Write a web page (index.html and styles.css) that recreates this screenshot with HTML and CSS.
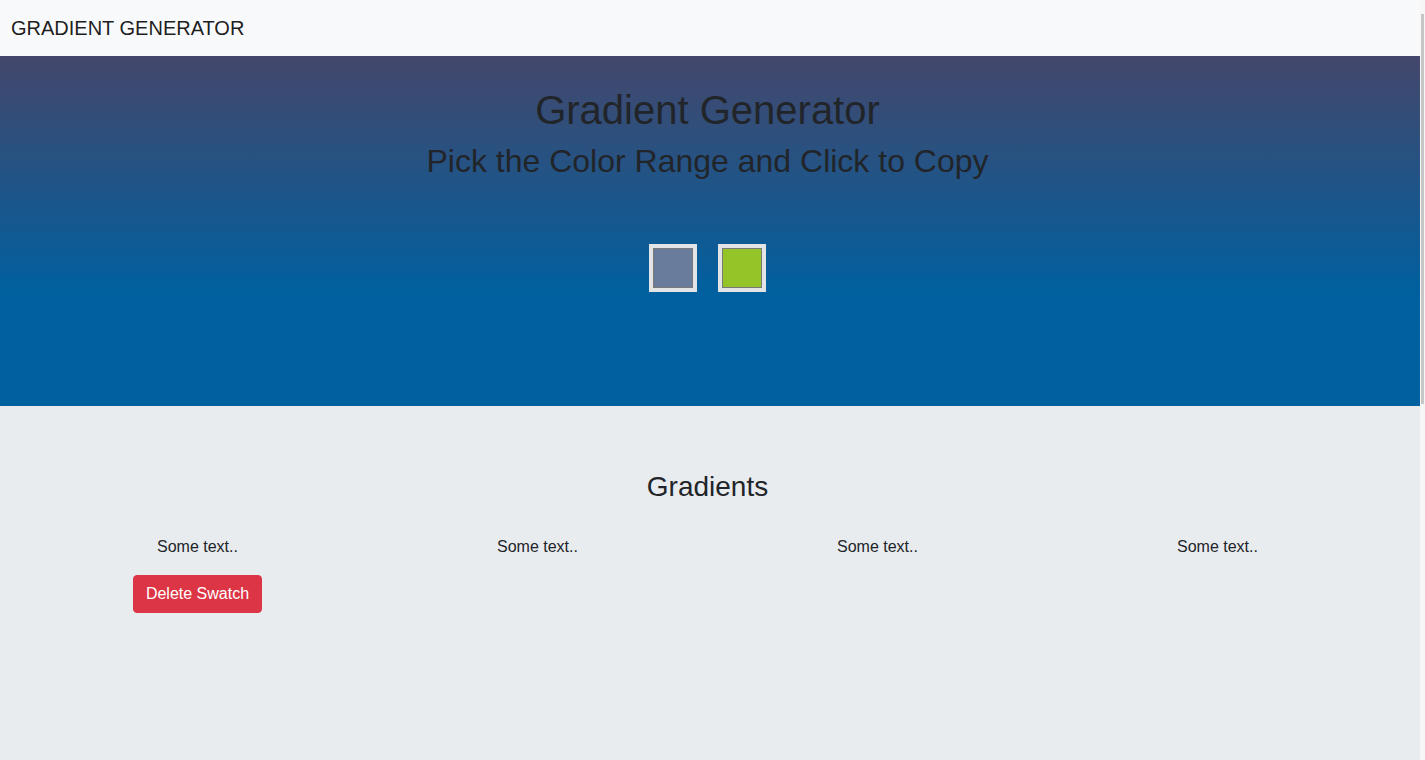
FILE: index.html
```html
<!DOCTYPE html>
<html lang="en">
<head>
<meta charset="utf-8">
<title>Gradient Generator</title>
<link rel="stylesheet" href="styles.css">
</head>
<body>
  <nav class="navbar">
    <span class="brand">GRADIENT GENERATOR</span>
  </nav>
  <header class="hero">
    <div class="hero-inner">
      <h1 class="title">Gradient Generator</h1>
      <h2 class="subtitle">Pick the Color Range and Click to Copy</h2>
      <div class="pickers">
        <div class="picker"><div class="swatch swatch-slate"></div></div>
        <div class="picker"><div class="swatch swatch-green"></div></div>
      </div>
    </div>
  </header>
  <main class="gradients">
    <h3 class="section-title">Gradients</h3>
    <div class="grid">
      <div class="card">
        <p class="card-text">Some text..</p>
        <button class="btn-danger">Delete Swatch</button>
      </div>
      <div class="card">
        <p class="card-text">Some text..</p>
      </div>
      <div class="card">
        <p class="card-text">Some text..</p>
      </div>
      <div class="card">
        <p class="card-text">Some text..</p>
      </div>
    </div>
  </main>
  <div class="scroll-thumb"></div>
</body>
</html>
```

FILE: styles.css
```css
* {
  box-sizing: border-box;
}
html {
  background: #f6f6f6;
}
body {
  margin: 0 5px 0 0;
  font-family: "Liberation Sans", Arial, sans-serif;
  color: #212529;
  background: #e9ecef;
}
.scroll-thumb {
  position: fixed;
  top: 14px;
  right: 1px;
  width: 3px;
  height: 390px;
  background: #c6c6c6;
}
.navbar {
  height: 56px;
  background: #f8f9fa;
  padding: 13px 11px;
}
.brand {
  display: block;
  font-size: 20px;
  line-height: 30px;
  color: rgba(0, 0, 0, 0.9);
}
.hero {
  height: 350px;
  background: linear-gradient(to bottom, #44476b 0px, #0060a0 240px, #0060a0 100%);
}
.hero-inner {
  padding: 30px 5px 0 0;
  text-align: center;
}
.title {
  margin: 0 0 8px;
  font-size: 40px;
  line-height: 48px;
  font-weight: 400;
}
.subtitle {
  margin: 0;
  font-size: 32px;
  line-height: 38.4px;
  font-weight: 400;
}
.pickers {
  display: flex;
  justify-content: center;
  gap: 21px;
  margin-top: 64px;
}
.picker {
  width: 48px;
  height: 48px;
  padding: 4px;
  background: #e3e4e6;
}
.swatch {
  width: 40px;
  height: 40px;
  border: 1px solid #7a7a7a;
}
.swatch-slate {
  background: #6a7c9c;
}
.swatch-green {
  background: #94c428;
}
.gradients {
  padding: 64px 5px 0 0;
  min-height: 1074px;
  text-align: center;
}
.section-title {
  margin: 0 0 31px;
  font-size: 28px;
  line-height: 33.6px;
  font-weight: 400;
}
.grid {
  display: grid;
  grid-template-columns: repeat(4, 340px);
  justify-content: center;
}
.card {
  display: flex;
  flex-direction: column;
  align-items: center;
}
.card-text {
  margin: 0 0 16px;
  font-size: 16px;
  line-height: 24px;
}
.btn-danger {
  font-family: inherit;
  font-size: 16px;
  line-height: 24px;
  padding: 6px 12px;
  color: #fff;
  background: #dc3545;
  border: 1px solid #dc3545;
  border-radius: 4px;
}
```
